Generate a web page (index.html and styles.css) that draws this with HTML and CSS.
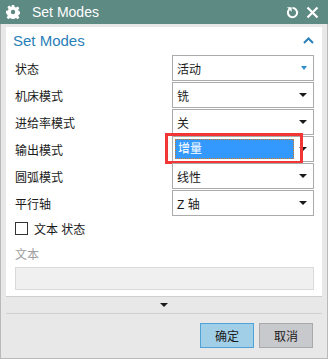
FILE: index.html
```html
<!DOCTYPE html>
<html lang="zh">
<head>
  <meta charset="UTF-8">
  <title>Set Modes</title>
  <link rel="stylesheet" href="styles.css">
</head>
<body>
  <div class="dialog">
    <div class="title-bar">
      <svg class="gear" width="14" height="14" viewBox="0 0 14 14">
        <path fill="#fff" fill-rule="evenodd" d="M5.8 0h2.4l.4 2a5 5 0 0 1 1.4.6l1.7-1.2 1.7 1.7-1.2 1.7a5 5 0 0 1 .6 1.4l2 .4v2.4l-2 .4a5 5 0 0 1-.6 1.4l1.2 1.7-1.7 1.7-1.7-1.2a5 5 0 0 1-1.4.6l-.4 2H5.8l-.4-2a5 5 0 0 1-1.4-.6l-1.7 1.2-1.7-1.7 1.2-1.7a5 5 0 0 1-.6-1.4L0 8.2V5.8l2-.4a5 5 0 0 1 .6-1.4L1.4 2.3l1.7-1.7L4.8 1.8A5 5 0 0 1 5.4 2zM7 4.8a2.2 2.2 0 1 0 0 4.4 2.2 2.2 0 0 0 0-4.4z"/>
      </svg>
      <span class="title">Set Modes</span>
      <div class="title-icons">
        <svg width="13" height="13" viewBox="0 0 13 13">
          <path d="M3.2 3.4A4.6 4.6 0 1 0 6.5 2" fill="none" stroke="#fff" stroke-width="2"/>
          <path d="M1 1.2h4.6v4.6z" fill="#fff"/>
        </svg>
        <svg width="13" height="13" viewBox="0 0 13 13">
          <path d="M1.5 1.5l10 10M11.5 1.5l-10 10" stroke="#fff" stroke-width="2.2"/>
        </svg>
      </div>
    </div>

    <div class="dialog-body">
      <div class="panel">
        <div class="panel-head">
          <span>Set Modes</span>
          <svg width="11" height="7" viewBox="0 0 11 7">
            <path d="M1 6l4.5-4.5L10 6" fill="none" stroke="#2b7fb8" stroke-width="2"/>
          </svg>
        </div>

        <div class="rows">
          <div class="row">
            <label>状态</label>
            <div class="select"><span>活动</span><i class="arrow blue"></i></div>
          </div>
          <div class="row">
            <label>机床模式</label>
            <div class="select"><span>铣</span><i class="arrow"></i></div>
          </div>
          <div class="row">
            <label>进给率模式</label>
            <div class="select"><span>关</span><i class="arrow"></i></div>
          </div>
          <div class="row">
            <label>输出模式</label>
            <div class="select focused"><span class="picked">增量</span><i class="arrow"></i><div class="mark"></div></div>
          </div>
          <div class="row">
            <label>圆弧模式</label>
            <div class="select"><span>线性</span><i class="arrow"></i></div>
          </div>
          <div class="row">
            <label>平行轴</label>
            <div class="select"><span>Z 轴</span><i class="arrow"></i></div>
          </div>
        </div>

        <div class="check-row">
          <span class="box"></span>
          <span>文本 状态</span>
        </div>
        <div class="muted">文本</div>
        <div class="text-field"></div>
      </div>

      <div class="expander"><i class="arrow"></i></div>

      <div class="buttons">
        <button class="btn primary">确定</button>
        <button class="btn">取消</button>
      </div>
    </div>
  </div>
</body>
</html>
```

FILE: styles.css
```css
* {
  box-sizing: border-box;
}

body {
  margin: 0;
  font-family: 'Liberation Sans', 'Noto Sans CJK SC', sans-serif;
  font-size: 12px;
  color: #1a1a1a;
}

.dialog {
  width: 328px;
  height: 359px;
  display: flex;
  flex-direction: column;
  background: #e8e8e8;
}

.title-bar {
  height: 24px;
  background: #5e8a84;
  color: #fff;
  display: flex;
  align-items: center;
  padding: 0 9px 0 6px;
}

.gear {
  margin-right: 12px;
}

.title {
  font-size: 14px;
  flex: 1;
}

.title-icons {
  display: flex;
  gap: 7px;
  padding-top: 1px;
}

.dialog-body {
  flex: 1;
  border: 1px solid #b9b9b9;
  border-top: none;
  padding: 3px 5px 0;
  display: flex;
  flex-direction: column;
}

.panel {
  background: #fff;
  border-bottom: 1px solid #cfcfcf;
  padding: 0 8px 8px 8px;
  height: 270px;
}

.panel-head {
  height: 28px;
  display: flex;
  align-items: center;
  justify-content: space-between;
  color: #2b7fb8;
  font-size: 15px;
  padding: 0 0 2px 0;
  margin-left: -1px;
}

.rows {
  display: flex;
  flex-direction: column;
  gap: 1px;
}

.row {
  display: flex;
  align-items: center;
  justify-content: space-between;
  height: 26px;
}

.row label {
  padding-left: 1px;
}

.select {
  position: relative;
  width: 142px;
  height: 26px;
  border: 1px solid #ababab;
  display: flex;
  align-items: center;
  justify-content: space-between;
  padding: 0 6px 0 4px;
}

.arrow {
  width: 0;
  height: 0;
  border-left: 4px solid transparent;
  border-right: 4px solid transparent;
  border-top: 4px solid #1a1a1a;
}

.arrow.blue {
  border-top-color: #2f8ccc;
  border-left-width: 3.5px;
  border-right-width: 3.5px;
}

.select.focused {
  padding-left: 2px;
}

.picked {
  width: 119px;
  height: 20px;
  line-height: 18px;
  background: #3399ff;
  color: #fff;
  border: 1px dotted #d07a2a;
  padding-left: 2px;
}

.mark {
  position: absolute;
  left: -8px;
  top: -4px;
  width: 138px;
  height: 31px;
  border: 3px solid #f23535;
}

.check-row {
  display: flex;
  align-items: center;
  gap: 6px;
  margin-top: 4px;
  height: 17px;
  padding-left: 1px;
}

.box {
  width: 13px;
  height: 13px;
  border: 1px solid #333;
}

.muted {
  color: #a0a0a0;
  margin-top: 8px;
  height: 17px;
  padding-left: 1px;
}

.text-field {
  margin-top: 5px;
  height: 23px;
  margin-left: 1px;
  background: #f0f0f0;
  border: 1px solid #d9d9d9;
}

.expander {
  height: 17px;
  border-bottom: 1px solid #cfcfcf;
  display: flex;
  justify-content: center;
  align-items: center;
  padding-right: 1px;
}

.buttons {
  display: flex;
  justify-content: flex-end;
  gap: 5px;
  padding: 9px 9px 0 0;
}

.btn {
  width: 54px;
  height: 25px;
  font-family: 'Liberation Sans', 'Noto Sans CJK SC', sans-serif;
  font-size: 12px;
  color: #1a1a1a;
  background: #c8c9cc;
  border: 1px solid #a9a9a9;
  padding: 0;
}

.btn.primary {
  background: #a2cfe8;
  border-color: #4fa3d6;
}
```
